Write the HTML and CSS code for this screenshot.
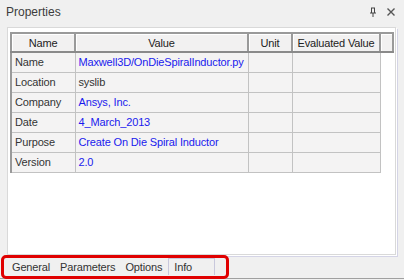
FILE: index.html
```html
<!DOCTYPE html>
<html>
<head>
    <title>Properties</title>
    <link rel="stylesheet" href="styles.css">
</head>
<body>
    <div class="titlebar">
        <span class="title">Properties</span>
        <span class="tools">
            <svg width="10" height="11" viewBox="0 0 10 11"><path d="M3 1h4M3.5 1v5M6.5 1v5M2 6h6M5 6v4" stroke="#444" stroke-width="1" fill="none"/></svg>
            <svg width="10" height="10" viewBox="0 0 10 10"><path d="M1.5 1.5l7 7M8.5 1.5l-7 7" stroke="#555" stroke-width="1.4"/></svg>
        </span>
    </div>

    <div class="frame">
        <table class="grid">
            <tr>
                <th class="c1">Name</th>
                <th class="c2">Value</th>
                <th class="c3">Unit</th>
                <th class="c4">Evaluated Value</th>
                <th class="c5"></th>
            </tr>
            <tr><td>Name</td><td class="val">Maxwell3D/OnDieSpiralInductor.py</td><td></td><td></td><td class="blank"></td></tr>
            <tr><td>Location</td><td>syslib</td><td></td><td></td><td class="blank"></td></tr>
            <tr><td>Company</td><td class="val">Ansys, Inc.</td><td></td><td></td><td class="blank"></td></tr>
            <tr><td>Date</td><td class="val">4_March_2013</td><td></td><td></td><td class="blank"></td></tr>
            <tr><td>Purpose</td><td class="val">Create On Die Spiral Inductor</td><td></td><td></td><td class="blank"></td></tr>
            <tr><td>Version</td><td class="val">2.0</td><td></td><td></td><td class="blank"></td></tr>
        </table>
    </div>

    <div class="tabs">
        <span class="tab">General</span>
        <span class="tab">Parameters</span>
        <span class="tab">Options</span>
        <span class="tab active">Info</span>
        <div class="highlight"></div>
    </div>
</body>
</html>
```

FILE: styles.css
```css
body {
    margin: 0;
    padding: 0;
    width: 404px;
    height: 280px;
    overflow: hidden;
    background-color: #f0f0f0;
    font-family: "Liberation Sans", Arial, sans-serif;
    font-size: 11px;
    letter-spacing: -0.15px;
    color: #333333;
    position: relative;
}

.titlebar {
    height: 24px;
    display: flex;
    align-items: center;
    justify-content: space-between;
    padding: 0 8px 0 6px;
    box-sizing: border-box;
}

.title {
    font-size: 12px;
    letter-spacing: 0;
    color: #3c3c3c;
}

.tools {
    display: flex;
    gap: 8px;
    align-items: center;
}

.frame {
    margin: 3px 8px 0 7px;
    height: 228px;
    padding: 4px 2px 0 2px;
    background-color: #ffffff;
    border: 1px solid #d9d9d9;
    box-shadow: 1px 1px 0 #ffffff, 2px 2px 0 #d4d4e6;
    box-sizing: border-box;
}

.grid {
    border-collapse: collapse;
    table-layout: fixed;
    width: 382px;
}

.grid th {
    height: 19px;
    padding: 0;
    font-weight: normal;
    color: #222222;
    white-space: nowrap;
    background-color: #f2f1f1;
    border-top: 2px solid #9a9a9a;
    border-bottom: 2px solid #8a8a8a;
    border-right: 2px solid #9a9a9a;
    box-shadow: inset 1px 1px 0 #ffffff;
    box-sizing: border-box;
}

.grid th.c1 { width: 64px; border-left: 2px solid #9a9a9a; }
.grid th.c2 { width: 173px; }
.grid th.c3 { width: 44px; }
.grid th.c4 { width: 88px; }
.grid th.c5 { width: 13px; }

.grid td {
    height: 20px;
    padding: 0 0 0 3px;
    background-color: #f4f3f3;
    border: 1px solid #c2c2c2;
    white-space: nowrap;
    overflow: hidden;
    box-sizing: border-box;
}

.grid td:first-child {
    border-left: 2px solid #9a9a9a;
}

.grid td.val {
    color: #1a1aee;
}

.grid td.blank {
    background-color: #ffffff;
    border: none;
}

.tabs {
    height: 23px;
    margin-top: 0;
    display: flex;
    align-items: center;
    padding-left: 12px;
    border-bottom: 1px solid #a0a0a0;
}

.tab {
    padding: 2px 0;
    margin-right: 10px;
    color: #333333;
}

.tab.active {
    margin-left: -4px;
    padding: 2px 22px 2px 5px;
    border: 1px solid #c8c8dc;
    border-bottom: none;
}

.highlight {
    position: absolute;
    left: 1px;
    top: 255px;
    width: 228px;
    height: 24px;
    border: 3px solid #e00000;
    border-radius: 5px;
    box-sizing: border-box;
}
```
